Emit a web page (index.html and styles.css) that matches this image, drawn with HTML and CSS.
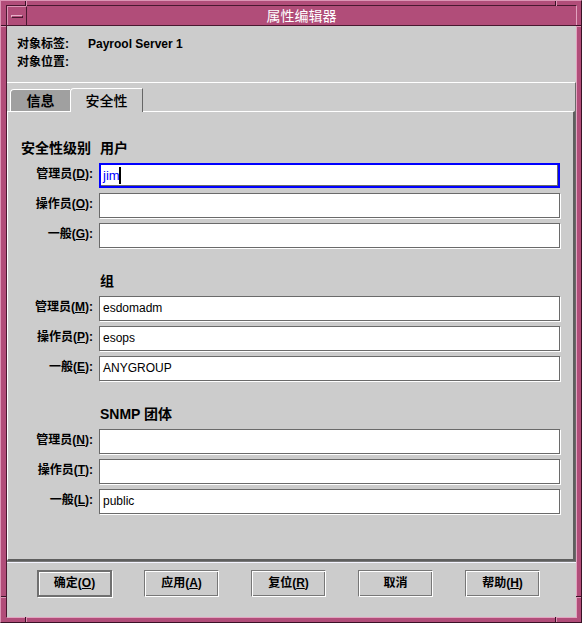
FILE: index.html
```html
<!DOCTYPE html>
<html lang="zh-CN">
<head>
<meta charset="utf-8">
<title>属性编辑器</title>
<link rel="stylesheet" href="styles.css">
</head>
<body>
<div class="window">
  <span class="mark mark-v mark-tl-top"></span>
  <span class="mark mark-h mark-tl-left"></span>
  <span class="mark mark-v mark-tr-top"></span>
  <span class="mark mark-h mark-tr-right"></span>
  <span class="mark mark-v mark-bl-bottom"></span>
  <span class="mark mark-h mark-bl-left"></span>
  <span class="mark mark-v mark-br-bottom"></span>
  <span class="mark mark-h mark-br-right"></span>
  <div class="inner">
    <div class="titlebar">
      <div class="minbtn"><span class="minglyph"></span></div>
      <div class="title">属性编辑器</div>
    </div>
    <div class="content">
      <div class="header">
        <div class="hrow"><span class="hlabel">对象标签:</span><span class="hvalue">Payrool Server 1</span></div>
        <div class="hrow"><span class="hlabel">对象位置:</span></div>
      </div>
      <div class="tabbox">
        <div class="tabs">
          <div class="tab">信息</div>
          <div class="tab active">安全性</div>
        </div>
        <div class="panel">
          <div class="group">
            <div class="level">安全性级别</div>
            <div class="gtitle">用户</div>
            <div class="flabel">管理员(<u>D</u>):</div>
            <div class="field focus"><span class="typed">jim</span><span class="caret"></span></div>
            <div class="flabel">操作员(<u>O</u>):</div>
            <div class="field"></div>
            <div class="flabel">一般(<u>G</u>):</div>
            <div class="field"></div>
          </div>
          <div class="group">
            <div class="level"></div>
            <div class="gtitle">组</div>
            <div class="flabel">管理员(<u>M</u>):</div>
            <div class="field">esdomadm</div>
            <div class="flabel">操作员(<u>P</u>):</div>
            <div class="field">esops</div>
            <div class="flabel">一般(<u>E</u>):</div>
            <div class="field">ANYGROUP</div>
          </div>
          <div class="group">
            <div class="level"></div>
            <div class="gtitle">SNMP 团体</div>
            <div class="flabel">管理员(<u>N</u>):</div>
            <div class="field"></div>
            <div class="flabel">操作员(<u>T</u>):</div>
            <div class="field"></div>
            <div class="flabel">一般(<u>L</u>):</div>
            <div class="field">public</div>
          </div>
        </div>
      </div>
      <div class="buttons">
        <div class="btn default">确定(<u>O</u>)</div>
        <div class="btn">应用(<u>A</u>)</div>
        <div class="btn">复位(<u>R</u>)</div>
        <div class="btn">取消</div>
        <div class="btn">帮助(<u>H</u>)</div>
      </div>
    </div>
  </div>
</div>
</body>
</html>
```

FILE: styles.css
```css
* { box-sizing: border-box; }
html, body { margin: 0; padding: 0; }
body {
  width: 582px;
  height: 623px;
  overflow: hidden;
  font-family: "Liberation Sans", "Noto Sans CJK SC", sans-serif;
  color: #000;
}

.window {
  position: relative;
  width: 582px;
  height: 623px;
  background: #b14d79;
  border: 1px solid;
  border-color: #dc95b5 #3a1226 #3a1226 #dc95b5;
  padding: 4px 4px 4px 5px;
}

.mark { position: absolute; display: block; }
.mark-v { width: 2px; height: 5px; border-left: 1px solid #3a1226; border-right: 1px solid #dc95b5; }
.mark-h { width: 5px; height: 2px; border-top: 1px solid #3a1226; border-bottom: 1px solid #dc95b5; }
.mark-tl-top { left: 24px; top: 0; }
.mark-tl-left { left: 0; top: 24px; }
.mark-tr-top { left: 554px; top: 0; }
.mark-tr-right { right: 0; top: 24px; }
.mark-bl-bottom { left: 24px; bottom: 0; }
.mark-bl-left { left: 0; bottom: 24px; }
.mark-br-bottom { left: 554px; bottom: 0; }
.mark-br-right { right: 0; bottom: 24px; }

.inner {
  height: 100%;
  display: flex;
  flex-direction: column;
  border: 1px solid;
  border-color: #4a1830 #e2a3c0 #e2a3c0 #4a1830;
}

.titlebar {
  height: 20px;
  flex: none;
  display: flex;
  background: #b14d79;
  border-bottom: 1px solid #4a1830;
}

.minbtn {
  width: 20px;
  height: 19px;
  border-top: 1px solid #dc95b5;
  border-left: 1px solid #dc95b5;
  border-right: 1px solid #4a1830;
  display: flex;
  align-items: center;
  justify-content: center;
}

.minglyph {
  display: block;
  width: 12px;
  height: 3px;
  border-top: 1px solid #e8b0c8;
  border-left: 1px solid #e8b0c8;
  border-bottom: 1px solid #4a1830;
  border-right: 1px solid #4a1830;
}

.title {
  flex: 1;
  text-align: center;
  color: #fff;
  font-family: "Noto Sans CJK SC", sans-serif;
  font-size: 14px;
  line-height: 19px;
}

.content {
  flex: 1;
  display: flex;
  flex-direction: column;
  background: #cccccc;
}

.header {
  padding: 9px 0 0 10px;
  font-size: 12px;
  font-weight: bold;
}

.hrow { height: 18px; line-height: 18px; display: flex; }
.hlabel { width: 71px; }

.tabbox {
  flex: 1;
  margin-top: 11px;
  display: flex;
  flex-direction: column;
  border-top: 1px solid #fff;
  border-right: 1px solid #6a6a6a;
  border-bottom: 1px solid #7a7a7a;
  padding-top: 5px;
}

.tabs {
  height: 23px;
  flex: none;
  display: flex;
  align-items: flex-start;
  padding-left: 3px;
}

.tab {
  width: 60px;
  height: 22px;
  margin-top: 1px;
  background: #a0a0a0;
  border-top: 1px solid #fff;
  border-left: 1px solid #fff;
  border-top-left-radius: 4px;
  font-family: "Noto Sans CJK SC", sans-serif;
  font-size: 14px;
  font-weight: bold;
  line-height: 20px;
  text-align: center;
}

.tab.active {
  position: relative;
  z-index: 1;
  width: 73px;
  height: 24px;
  margin-top: 0;
  background: #cccccc;
  border-right: 1px solid #666;
  font-weight: 500;
  line-height: 22px;
}

.panel {
  flex: 1;
  border-top: 1px solid #fff;
  border-left: 1px solid #fff;
  border-right: 2px solid #5e5e5e;
  border-bottom: 2px solid #5e5e5e;
  padding: 26px 13px 0 13px;
}

.group {
  display: grid;
  grid-template-columns: 72px 1fr;
  grid-template-rows: 20px 25px 25px 25px;
  column-gap: 6px;
  row-gap: 5px;
  margin-bottom: 23px;
}

.level, .gtitle {
  font-size: 14px;
  font-weight: bold;
  line-height: 20px;
  white-space: nowrap;
}

.gtitle { padding-left: 1px; }

.flabel {
  font-size: 12px;
  font-weight: bold;
  line-height: 22px;
  text-align: right;
  white-space: nowrap;
}

.field {
  background: #fff;
  border: 1px solid #6a6a6a;
  box-shadow: 1px 1px 0 #fff;
  padding: 0 3px;
  font-size: 12px;
  line-height: 23px;
  white-space: nowrap;
  display: flex;
  align-items: center;
}

.field.focus {
  border: 2px solid #0000ff;
  box-shadow: inset -1px -1px 0 #6a6a6a;
  padding: 0 2px;
  line-height: 21px;
  color: #0000ff;
  font-size: 13px;
}

.caret {
  display: inline-block;
  width: 0;
  height: 17px;
  border-left: 2px solid #000;
  margin-left: -1px;
}

.buttons {
  flex: none;
  height: 55px;
  border-top: 1px solid #f4f4ff;
  padding: 7px 0 0 30px;
  display: flex;
  align-items: flex-start;
  gap: 32px;
}

.btn {
  width: 75px;
  height: 27px;
  border: 1px solid;
  border-color: #777 #fff #fff #777;
  box-shadow: inset 1px 1px 0 #fff, inset -1px -1px 0 #777;
  font-size: 12px;
  font-weight: bold;
  line-height: 25px;
  text-align: center;
  white-space: nowrap;
}

.btn.default {
  border: 2px solid #707070;
  box-shadow: inset 1px 1px 0 #fff, 1px 1px 0 #fff;
  line-height: 23px;
}
```
